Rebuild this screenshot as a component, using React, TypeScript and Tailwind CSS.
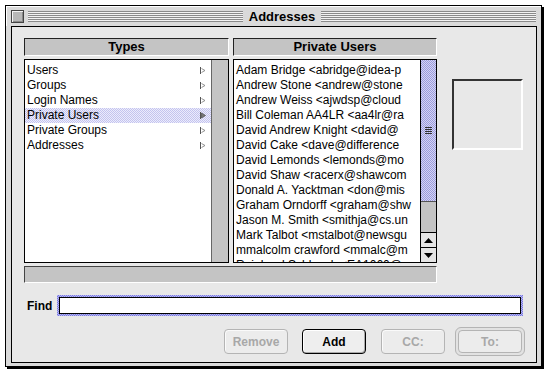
import React from "react";

const types = ["Users", "Groups", "Login Names", "Private Users", "Private Groups", "Addresses"];
const users = [
  "Adam Bridge <abridge@idea-p",
  "Andrew Stone <andrew@stone",
  "Andrew Weiss <ajwdsp@cloud",
  "Bill Coleman AA4LR <aa4lr@ra",
  "David Andrew Knight <david@",
  "David Cake <dave@difference",
  "David Lemonds <lemonds@mo",
  "David Shaw <racerx@shawcom",
  "Donald A. Yacktman <don@mis",
  "Graham Orndorff <graham@shw",
  "Jason M. Smith <smithja@cs.un",
  "Mark Talbot <mstalbot@newsgu",
  "mmalcolm crawford <mmalc@m",
  "Reinhard Schlaack <EA1060@",
];

function Arrow({ filled }: { filled?: boolean }) {
  return (
    <svg width="7" height="9" viewBox="0 0 7 9" className="shrink-0">
      <line x1="0.5" y1="1" x2="0.5" y2="8" stroke="#555" strokeWidth="1" />
      {filled ? (
        <path d="M1.5 2 L5.5 4.5 L1.5 7 Z" fill="#777" stroke="#555" strokeWidth="0.8" />
      ) : (
        <path d="M1.5 2.5 L5 4.5 L1.5 6.5" fill="none" stroke="#777" strokeWidth="0.8" />
      )}
    </svg>
  );
}

export default function App() {
  return (
    <div className="w-[548px] h-[378px] bg-white pt-[5px] pl-[5px] font-['Liberation_Sans',Arial,sans-serif] text-black">
      <div className="w-[537px] h-[362px] border border-black bg-[#dadada] shadow-[2px_2px_0_#000] flex flex-col">
        {/* title bar */}
        <div className="h-[20px] flex items-center pl-[4px] pr-[5px] border-t border-l border-t-white border-l-white">
          <div className="w-[13px] h-[13px] border border-[#444] bg-[#b8b8b8] shadow-[inset_1px_1px_0_#f4f4f4,inset_-1px_-1px_0_#888]" />
          <div className="ml-[4px] flex-1 h-[11px] bg-[repeating-linear-gradient(to_bottom,#8a8a8a_0_1px,#f2f2f2_1px_2px)]" />
          <div className="px-[6px] text-[13px] font-bold leading-[20px]">Addresses</div>
          <div className="flex-1 h-[11px] bg-[repeating-linear-gradient(to_bottom,#8a8a8a_0_1px,#f2f2f2_1px_2px)]" />
        </div>
        {/* content */}
        <div className="ml-[5px] mr-[4px] w-[526px] h-[337px] border border-black bg-[#e8e8e8] flex flex-col pl-[12px] pt-[11px]">
          <div className="flex">
            {/* Types column */}
            <div className="w-[205px] flex flex-col">
              <div className="h-[18px] bg-[#c4c4c4] border-t border-l border-t-[#222] border-l-[#222] border-b border-r border-b-white border-r-white flex items-center justify-center text-[13px] font-bold">
                Types
              </div>
              <div className="mt-[3px] h-[204px] border border-black bg-white flex">
                <div className="flex-1 pt-[3px] overflow-hidden">
                  {types.map((t) => {
                    const sel = t === "Private Users";
                    return (
                      <div
                        key={t}
                        className={
                          "h-[15px] flex items-center pl-[2px] pr-[4px] text-[12px] leading-[15px] " +
                          (sel
                            ? "bg-[repeating-conic-gradient(#c4c4ee_0_25%,#ececfc_0_50%)] bg-[length:2px_2px]"
                            : "")
                        }
                      >
                        <span className="flex-1 whitespace-nowrap">{t}</span>
                        <Arrow filled={sel} />
                      </div>
                    );
                  })}
                </div>
                <div className="w-[17px] bg-[#c4c4c4] border-l border-l-[#666]" />
              </div>
            </div>
            {/* Private Users column */}
            <div className="ml-[4px] w-[204px] flex flex-col">
              <div className="h-[18px] bg-[#c4c4c4] border-t border-l border-t-[#222] border-l-[#222] border-b border-r border-b-white border-r-white flex items-center justify-center text-[13px] font-bold">
                Private Users
              </div>
              <div className="mt-[3px] h-[204px] border border-black bg-white flex">
                <div className="flex-1 pt-[3px] overflow-hidden">
                  {users.map((u) => (
                    <div key={u} className="h-[15px] pl-[2px] text-[12px] leading-[15px] whitespace-nowrap overflow-hidden">
                      {u}
                    </div>
                  ))}
                </div>
                <div className="w-[16px] border-l border-l-black flex flex-col bg-[#c4c4c4]">
                  <div className="h-[142px] border-b border-b-[#555] bg-[repeating-conic-gradient(#9c9cdc_0_25%,#d4d4f4_0_50%)] bg-[length:2px_2px] flex items-center justify-center">
                    <div className="w-[7px] h-[7px] bg-[repeating-linear-gradient(to_bottom,#333_0_1px,transparent_1px_2px)]" />
                  </div>
                  <div className="flex-1 bg-[#c4c4c4]" />
                  <div className="h-[15px] border-t border-t-black bg-[#e4e4e4] flex items-center justify-center">
                    <svg width="9" height="5" viewBox="0 0 9 5"><path d="M4.5 0 L9 5 L0 5 Z" fill="#000" /></svg>
                  </div>
                  <div className="h-[15px] border-t border-t-black bg-[#e4e4e4] flex items-center justify-center">
                    <svg width="9" height="5" viewBox="0 0 9 5"><path d="M0 0 L9 0 L4.5 5 Z" fill="#000" /></svg>
                  </div>
                </div>
              </div>
            </div>
            {/* preview box */}
            <div className="ml-[15px] mt-[41px] w-[71px] h-[71px] border-t-2 border-l-2 border-t-[#333] border-l-[#333] border-b-2 border-r-2 border-b-white border-r-white" />
          </div>
          {/* bar */}
          <div className="mt-[3px] w-[413px] h-[17px] bg-[#c4c4c4] border-t border-l border-t-[#444] border-l-[#444] border-b border-r border-b-white border-r-white" />
          {/* find row */}
          <div className="mt-[12px] flex items-center">
            <span className="ml-[3px] w-[30px] text-[12px] font-bold">Find</span>
            <div className="w-[466px] h-[21px] p-[2px] bg-[repeating-conic-gradient(#7a7ae0_0_25%,#b8b8f4_0_50%)] bg-[length:2px_2px]">
              <div className="w-full h-full border border-black bg-white" />
            </div>
          </div>
          {/* buttons */}
          <div className="mt-[13px] flex items-center">
            <div className="ml-[200px] w-[64px] h-[25px] rounded-[4px] border border-[#b4b4b4] bg-[#ececec] shadow-[inset_1px_1px_0_#fafafa] flex items-center justify-center text-[12px] font-bold text-[#a8a8a8]">
              Remove
            </div>
            <div className="ml-[14px] w-[64px] h-[25px] rounded-[4px] border border-black bg-[#eeeeee] shadow-[inset_1px_1px_0_#fff,inset_-1px_-1px_0_#aaa] flex items-center justify-center text-[12px] font-bold">
              Add
            </div>
            <div className="ml-[15px] w-[64px] h-[25px] rounded-[4px] border border-[#b4b4b4] bg-[#ececec] shadow-[inset_1px_1px_0_#fafafa] flex items-center justify-center text-[12px] font-bold text-[#a8a8a8]">
              CC:
            </div>
            <div className="ml-[10px] w-[70px] h-[29px] rounded-[6px] border border-[#b4b4b4] bg-[#e2e2e2] p-[2px] -my-[2px]">
              <div className="w-full h-full rounded-[4px] border border-[#b4b4b4] bg-[#ececec] flex items-center justify-center text-[12px] font-bold text-[#a8a8a8]">
                To:
              </div>
            </div>
          </div>
        </div>
      </div>
    </div>
  );
}
